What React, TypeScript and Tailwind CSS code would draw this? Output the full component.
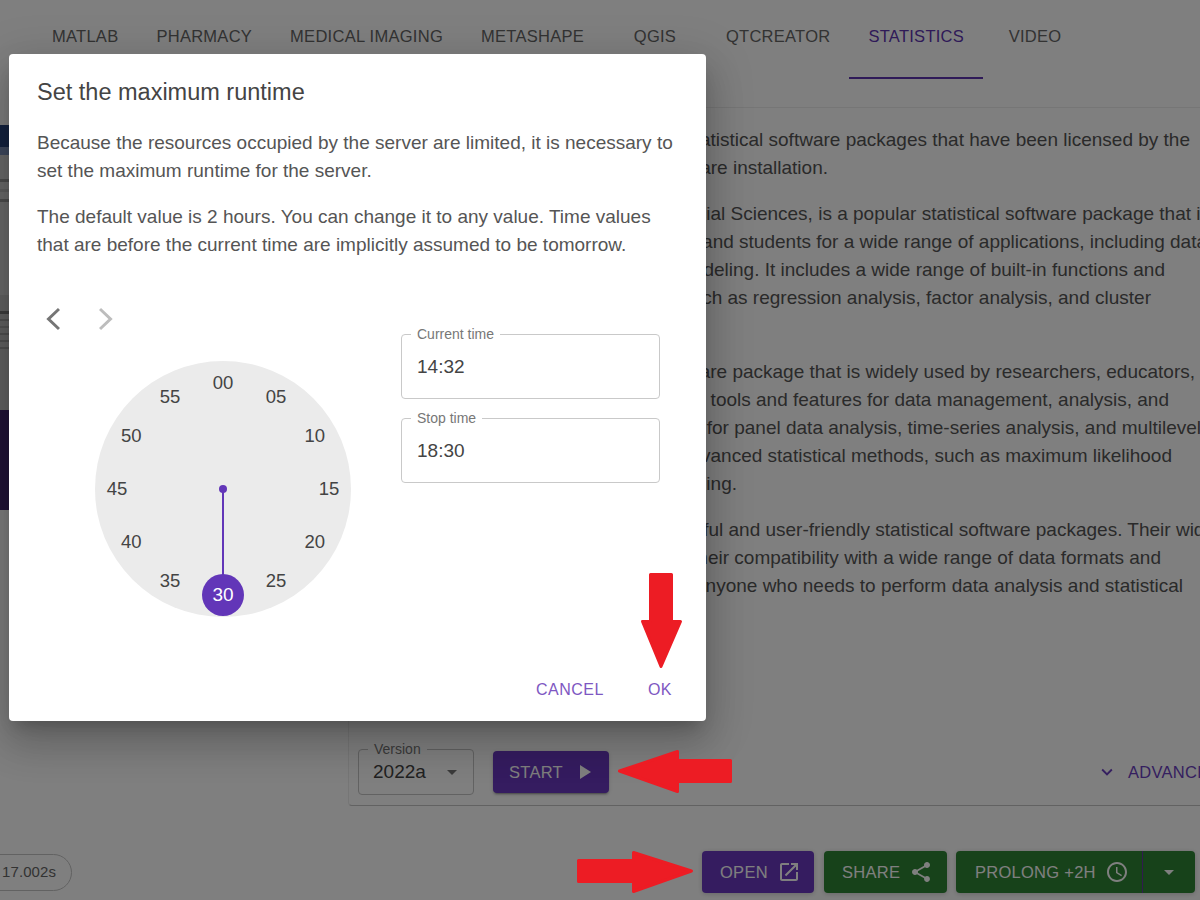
import React from "react";

const FONT = "font-['Liberation_Sans',Arial,sans-serif]";

const tabs = [
  { label: "MATLAB", cls: "px-[19px]" },
  { label: "PHARMACY", cls: "px-[19px]" },
  { label: "MEDICAL IMAGING", cls: "px-[19px]" },
  { label: "METASHAPE", cls: "px-[19px]" },
  { label: "QGIS", cls: "w-[104px] justify-center" },
  { label: "QTCREATOR", cls: "px-[19px]" },
  { label: "STATISTICS", cls: "px-[19px] border-b-2 border-[#5e35b1] text-[#5e35b1]" },
  { label: "VIDEO", cls: "w-[104px] justify-center" },
];

const paragraphs = [
  [
    { t: "This page provides access to statistical software packages that have been licensed by the", w: "w-[825px]" },
    { t: "university and do not require any software installation.", w: "w-[463px]" },
  ],
  [
    { t: "SPSS, short for Statistical Package for the Social Sciences, is a popular statistical software package that is", w: "w-[845px]" },
    { t: "widely used by researchers, educators, and students for a wide range of applications, including data", w: "w-[842px]" },
    { t: "analysis, data management and statistical modeling. It includes a wide range of built-in functions and", w: "w-[800px]" },
    { t: "procedures for statistical analysis, such as regression analysis, factor analysis, and cluster", w: "w-[786px]" },
    { t: "analysis.", w: "w-[300px]" },
  ],
  [
    { t: "Stata is another statistical software package that is widely used by researchers, educators,", w: "w-[830px]" },
    { t: "and students. It provides a wide range of tools and features for data management, analysis, and", w: "w-[804px]" },
    { t: "visualization, and is especially useful for panel data analysis, time-series analysis, and multilevel", w: "w-[836px]" },
    { t: "modeling. It also supports advanced statistical methods, such as maximum likelihood", w: "w-[807px]" },
    { t: "estimation and structural equation modeling.", w: "w-[372px]" },
  ],
  [
    { t: "Both SPSS and Stata are powerful and user-friendly statistical software packages. Their wide", w: "w-[850px]" },
    { t: "range of features, along with their compatibility with a wide range of data formats and", w: "w-[796px]" },
    { t: "other software, make them ideal for anyone who needs to perform data analysis and statistical", w: "w-[818px]" },
    { t: "modeling.", w: "w-[300px]" },
  ],
];

function Icon({ d, className }: { d: string | string[]; className: string }) {
  const ds = Array.isArray(d) ? d : [d];
  return (
    <svg viewBox="0 0 24 24" className={className} fill="currentColor">
      {ds.map((p) => (
        <path key={p} d={p} />
      ))}
    </svg>
  );
}

const OPEN_NEW = "M19 19H5V5h7V3H5c-1.11 0-2 .9-2 2v14c0 1.1.89 2 2 2h14c1.1 0 2-.9 2-2v-7h-2v7zM14 3v2h3.59l-9.83 9.83 1.41 1.41L19 6.41V10h2V3h-7z";
const SHARE = "M18 16.08c-.76 0-1.44.3-1.96.77L8.91 12.7c.05-.23.09-.46.09-.7s-.04-.47-.09-.7l7.05-4.11c.54.5 1.25.81 2.04.81 1.66 0 3-1.34 3-3s-1.34-3-3-3-3 1.34-3 3c0 .24.04.47.09.7L8.04 9.81C7.5 9.31 6.79 9 6 9c-1.66 0-3 1.34-3 3s1.34 3 3 3c.79 0 1.5-.31 2.04-.81l7.12 4.16c-.05.21-.08.43-.08.65 0 1.61 1.31 2.92 2.92 2.92 1.61 0 2.92-1.31 2.92-2.92s-1.31-2.92-2.92-2.92z";
const CLOCK = [
  "M11.99 2C6.47 2 2 6.48 2 12s4.47 10 9.99 10C17.52 22 22 17.52 22 12S17.52 2 11.99 2zM12 20c-4.42 0-8-3.58-8-8s3.58-8 8-8 8 3.58 8 8-3.58 8-8 8z",
  "M12.5 7H11v6l5.25 3.15.75-1.23-4.5-2.67z",
];
const PLAY = "M8 5v14l11-7z";
const DROP = "M7 10l5 5 5-5z";
const EXPAND = "M16.59 8.59L12 13.17 7.41 8.59 6 10l6 6 6-6z";

function LeftStrip() {
  return (
    <div className="w-[348px] shrink-0 flex flex-col">
      <div className="h-[18px]" />
      <div className="h-[22px] bg-[#2a4680]" />
      <div className="h-[8px] bg-[#7f93bd]" />
      <div className="h-[140px] bg-[#d4d4d4] flex flex-col gap-[7px] pt-[24px]">
        <div className="h-[3px] w-[9px] bg-[#9a9a9a]" />
        <div className="h-[3px] w-[9px] bg-[#bdbdbd]" />
        <div className="h-[3px] w-[9px] bg-[#9a9a9a]" />
      </div>
      <div className="h-[115px] bg-[#c4c4c4] flex flex-col gap-[5px] pt-[16px]">
        <div className="h-[3px] w-[9px] bg-[#7a7a7a]" />
        <div className="h-[2px] w-[9px] bg-[#a0a0a0]" />
        <div className="h-[2px] w-[9px] bg-[#a8a8a8]" />
        <div className="h-[2px] w-[9px] bg-[#a0a0a0]" />
        <div className="h-[2px] w-[9px] bg-[#a0a0a0]" />
        <div className="h-[2px] w-[9px] bg-[#a0a0a0]" />
      </div>
      <div className="h-[100px] bg-[#43296e]" />
    </div>
  );
}

function Field({ label, value }: { label: string; value: string }) {
  return (
    <div className="relative h-[65px] w-[259px] rounded-[4px] border border-[#c9c9c9] flex items-center pl-[15px] pt-[2px] text-[19px] text-[#444444]">
      <span className="absolute left-[9px] -top-[9px] bg-white px-[6px] text-[14px] leading-[16px] text-[#777777]">{label}</span>
      {value}
    </div>
  );
}

function Clock() {
  const nums = ["00", "05", "10", "15", "20", "25", "", "35", "40", "45", "50", "55"];
  return (
    <div className="relative w-[256px] h-[256px] rounded-full bg-[#ebebeb]">
      {nums.map((n, i) => {
        if (!n) return null;
        const a = (i * Math.PI) / 6;
        return (
          <span
            key={n}
            className="absolute -translate-x-1/2 -translate-y-1/2 text-[18.5px] leading-none text-[#444444]"
            style={{ left: 128 + 106 * Math.sin(a), top: 128 - 106 * Math.cos(a) }}
          >
            {n}
          </span>
        );
      })}
      <span className="absolute left-[124px] top-[124px] w-[8px] h-[8px] rounded-full bg-[#6236b8]" />
      <span className="absolute left-[127px] top-[128px] w-[2px] h-[90px] bg-[#6236b8]" />
      <span className="absolute left-[107px] top-[213px] w-[42px] h-[42px] rounded-full bg-[#6236b8] flex items-center justify-center text-[19px] text-white">30</span>
    </div>
  );
}

function Modal() {
  return (
    <div className="absolute left-[9px] top-[54px] w-[697px] h-[667px] bg-white rounded-[4px] shadow-[0_11px_15px_-7px_rgba(0,0,0,0.2),0_24px_38px_3px_rgba(0,0,0,0.14),0_9px_46px_8px_rgba(0,0,0,0.12)] flex flex-col">
      <h2 className="pl-[28px] pt-[22px] h-[75px] text-[23.5px] leading-[32px] text-[#444444] font-normal">Set the maximum runtime</h2>
      <div className="pl-[28px] pr-[24px] text-[19px] leading-[28px] text-[#555555] flex flex-col gap-[18px]">
        <p>Because the resources occupied by the server are limited, it is necessary to set the maximum runtime for the server.</p>
        <p>The default value is 2 hours. You can change it to any value. Time values that are before the current time are implicitly assumed to be tomorrow.</p>
      </div>
      <div className="flex mt-[48px]">
        <div className="w-[392px] pl-[86px]">
          <div className="flex gap-[39px] -ml-[49px] h-[24px] items-center">
            <svg viewBox="0 0 14 24" className="w-[14px] h-[24px] text-[#757575]" fill="none" stroke="currentColor" strokeWidth="3">
              <polyline points="13,2 2.5,12 13,22" />
            </svg>
            <svg viewBox="0 0 14 24" className="w-[14px] h-[24px] text-[#bdbdbd]" fill="none" stroke="currentColor" strokeWidth="3">
              <polyline points="1,2 11.5,12 1,22" />
            </svg>
          </div>
          <div className="mt-[30px]">
            <Clock />
          </div>
        </div>
        <div className="flex flex-col gap-[19px] pt-[27px]">
          <Field label="Current time" value="14:32" />
          <Field label="Stop time" value="18:30" />
        </div>
      </div>
      <div className="mt-auto mb-[21px] flex justify-end gap-[44px] pr-[34px] text-[16px] leading-[20px] tracking-[0.5px] text-[#7e57c2]">
        <span>CANCEL</span>
        <span>OK</span>
      </div>
    </div>
  );
}

function Arrows() {
  return (
    <>
      <svg className="absolute left-[638px] top-[570px] w-[48px] h-[102px] text-[#ed1c24]" viewBox="0 0 48 102" fill="currentColor" stroke="currentColor" strokeWidth="3" strokeLinejoin="round">
        <polygon points="12.5,4.5 33.5,4.5 33.5,51.5 42.5,51.5 23,96.5 4.5,51.5 12.5,51.5" />
      </svg>
      <svg className="absolute left-[615px] top-[747px] w-[120px] h-[50px] text-[#ed1c24]" viewBox="0 0 120 50" fill="currentColor" stroke="currentColor" strokeWidth="3" strokeLinejoin="round">
        <polygon points="4.5,24 62.5,4.5 62.5,13.5 115.5,13.5 115.5,34.5 62.5,34.5 62.5,44.5" />
      </svg>
      <svg className="absolute left-[574px] top-[848px] w-[122px] h-[48px] text-[#ed1c24]" viewBox="0 0 122 48" fill="currentColor" stroke="currentColor" strokeWidth="3" strokeLinejoin="round">
        <polygon points="4.5,12.5 59.5,12.5 59.5,4.5 117.5,23 59.5,43.5 59.5,33.5 4.5,33.5" />
      </svg>
    </>
  );
}

export default function App() {
  return (
    <div className={`relative h-[900px] w-full overflow-hidden bg-white ${FONT}`}>
      <div className="flex pl-[33px] h-[79px] text-[16.5px] tracking-[0.27px] text-[#666666]">
        {tabs.map((t) => (
          <div key={t.label} className={`flex pt-[26px] leading-[20px] whitespace-nowrap h-[79px] ${t.cls}`}>
            {t.label}
          </div>
        ))}
      </div>
      <div className="flex mt-[28px] h-[699px]">
        <LeftStrip />
        <div className="w-[900px] shrink-0 h-[699px] rounded-[4px] border border-[#ececec] border-b-[#c4c4c4] flex flex-col">
          <div className="pt-[18px] pl-[16px] text-[19px] leading-[28px] text-[#555555] flex flex-col gap-[18px] h-[641px]">
            {paragraphs.map((p, i) => (
              <div key={i}>
                {p.map((l) => (
                  <div key={l.t} className={`flex justify-end whitespace-nowrap ${l.w}`}>
                    {l.t}
                  </div>
                ))}
              </div>
            ))}
          </div>
          <div className="flex items-center pl-[9px] relative">
            <div className="relative w-[116px] h-[46px] rounded-[4px] border border-[#c4c4c4] flex items-center pl-[14px] text-[19px] text-[#444444]">
              <span className="absolute left-[9px] -top-[9px] bg-white px-[6px] text-[14px] leading-[16px] text-[#777777]">Version</span>
              2022a
              <Icon d={DROP} className="absolute right-[9px] top-[10px] w-[24px] h-[24px] text-[#777777]" />
            </div>
            <div className="ml-[19px] w-[116px] h-[42px] rounded-[4px] bg-[#6a38c0] text-white flex items-center pl-[16px] text-[16.5px] tracking-[0.27px] shadow-[0_3px_1px_-2px_rgba(0,0,0,0.2),0_2px_2px_rgba(0,0,0,0.14),0_1px_5px_rgba(0,0,0,0.12)]">
              START
              <Icon d={PLAY} className="ml-[9px] w-[24px] h-[24px]" />
            </div>
            <div className="ml-[487px] flex items-center text-[16.5px] tracking-[0.27px] text-[#6b3fc0] whitespace-nowrap">
              <Icon d={EXPAND} className="w-[22px] h-[22px] mr-[10px]" />
              ADVANCED
            </div>
          </div>
        </div>
      </div>
      <div className="flex items-center mt-[45px] pr-[5px] h-[42px]">
        <div className="-ml-[30px] w-[102px] h-[37px] rounded-full border border-[#c4c4c4] flex items-center pl-[31px] text-[15px] tracking-[0.1px] text-[#666666]">17.002s</div>
        <div className="ml-auto flex gap-[9px] text-white text-[16.5px] tracking-[0.27px]">
          <div className="w-[112px] h-[42px] rounded-[4px] bg-[#6a38c0] flex items-center pl-[18px] shadow-[0_1px_5px_rgba(0,0,0,0.2)] mr-[1px]">
            OPEN
            <Icon d={OPEN_NEW} className="ml-[9px] w-[24px] h-[24px]" />
          </div>
          <div className="w-[123px] h-[42px] rounded-[4px] bg-[#2e8435] flex items-center pl-[18px] shadow-[0_1px_5px_rgba(0,0,0,0.2)]">
            SHARE
            <Icon d={SHARE} className="ml-[9px] w-[24px] h-[24px]" />
          </div>
          <div className="w-[239px] h-[42px] rounded-[4px] bg-[#2e8435] flex items-center shadow-[0_1px_5px_rgba(0,0,0,0.2)]">
            <div className="w-[187px] h-[42px] flex items-center pl-[19px] border-r border-[#62369f]">
              PROLONG +2H
              <Icon d={CLOCK} className="ml-[9px] w-[24px] h-[24px]" />
            </div>
            <div className="flex-1 flex items-center justify-center">
              <Icon d={DROP} className="w-[24px] h-[24px]" />
            </div>
          </div>
        </div>
      </div>
      <div className="absolute inset-0 bg-black/50" />
      <Modal />
      <Arrows />
    </div>
  );
}
